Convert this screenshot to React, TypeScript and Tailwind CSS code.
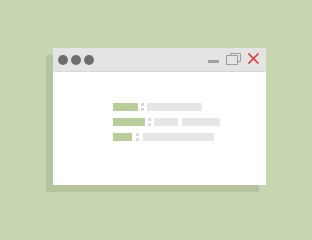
import React from 'react';

const Colon: React.FC = () => (
    <div className="flex flex-col justify-between w-[3px] h-[8px]">
        <div className="h-[3px] bg-[#dadada]" />
        <div className="h-[3px] bg-[#dadada]" />
    </div>
);

const Row: React.FC<{ label: number; values: number[]; gap?: number }> = ({ label, values }) => (
    <div className="flex items-center h-[8px] gap-[3px]">
        <div className="h-[8px] bg-[#b8cd98]" style={{ width: label }} />
        <Colon />
        <div className="flex gap-[4px]">
            {values.map((w, i) => (
                <div key={i} className="h-[8px] bg-[#e6e6e6]" style={{ width: w }} />
            ))}
        </div>
    </div>
);

export default function App() {
    return (
        <div className="w-[312px] h-[240px] bg-[#c7d5b1] pt-[48px] pl-[53px] overflow-hidden">
            <div className="w-[213px] h-[137px] bg-white flex flex-col shadow-[-7px_7px_0_#b4c49d]">
                {/* Title bar */}
                <div className="h-[24px] bg-[#e4e4e4] flex items-center justify-between pl-[5px] pr-[7px] border-b border-[#d6d6d6]">
                    <div className="flex gap-[3px]">
                        <div className="w-[10px] h-[10px] rounded-full bg-[#6d6d6d]" />
                        <div className="w-[10px] h-[10px] rounded-full bg-[#6d6d6d]" />
                        <div className="w-[10px] h-[10px] rounded-full bg-[#6d6d6d]" />
                    </div>
                    <div className="flex items-center gap-[7px]">
                        <div className="w-[11px] h-[3px] bg-[#a2a2a2] mt-[4px]" />
                        <svg width="15" height="12" viewBox="0 0 15 12" className="mt-[-2px]">
                            <path d="M4.5 2.5 V0.5 H14.5 V8.5 H11.5" fill="none" stroke="#9e9e9e" strokeWidth="1" />
                            <rect x="0.5" y="2.5" width="11" height="9" fill="none" stroke="#9e9e9e" strokeWidth="1" />
                        </svg>
                        <svg width="11" height="11" viewBox="0 0 11 11" className="mt-[-2px]">
                            <path d="M1 1 L10 10 M10 1 L1 10" stroke="#e53b3b" strokeWidth="1.6" strokeLinecap="square" />
                        </svg>
                    </div>
                </div>

                {/* Content */}
                <div className="flex flex-col gap-[7px] pt-[31px] pl-[60px]">
                    <Row label={25} values={[55]} />
                    <Row label={32} values={[24, 38]} />
                    <div className="flex items-center h-[8px] gap-[4px]">
                        <div className="h-[8px] w-[19px] bg-[#b8cd98]" />
                        <Colon />
                        <div className="h-[8px] w-[71px] bg-[#e6e6e6]" />
                    </div>
                </div>
            </div>
        </div>
    );
}
